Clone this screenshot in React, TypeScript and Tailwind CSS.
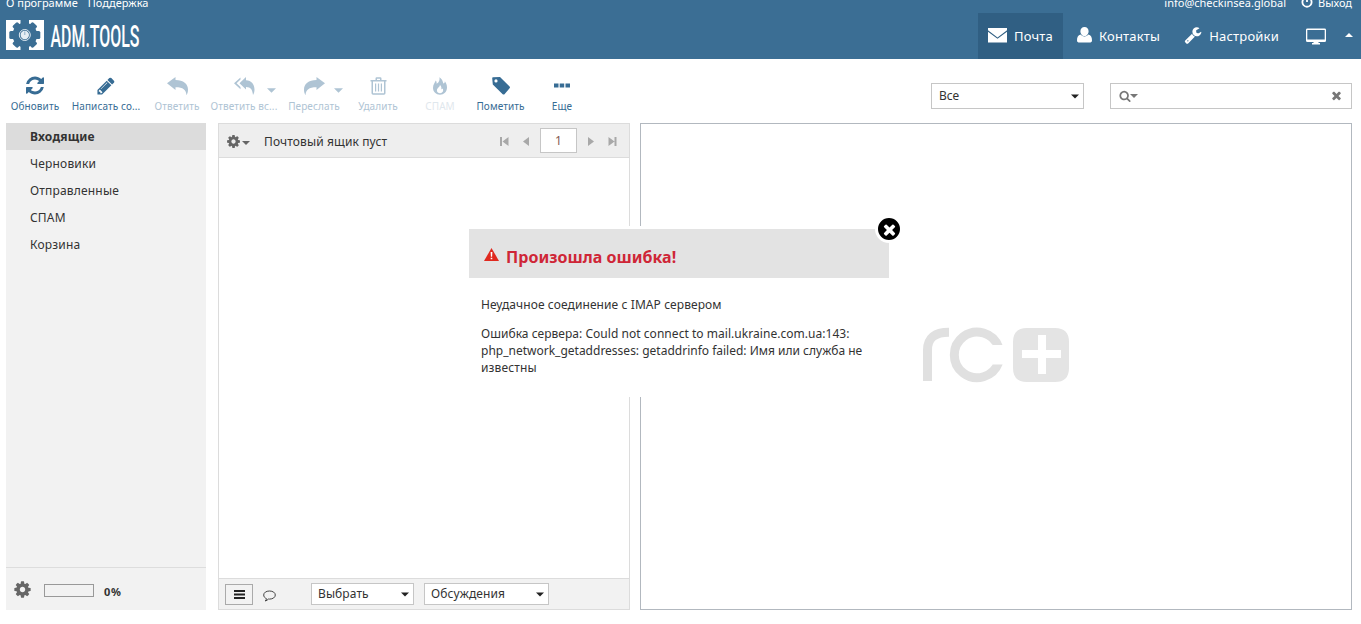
import type { ReactNode } from "react";

type IconProps = { d: string; box?: string; className?: string };

function Icon({ d, box = "0 0 1792 1792", className = "" }: IconProps) {
  return (
    <svg viewBox={box} className={`block shrink-0 fill-current ${className}`} aria-hidden="true">
      <path d={d} fillRule="evenodd" />
    </svg>
  );
}

const REFRESH =
  "M1511 1056q0 5-1 7-64 268-268 434.5t-478 166.5q-146 0-282.5-55t-243.5-157l-129 129q-19 19-45 19t-45-19-19-45v-448q0-26 19-45t45-19h448q26 0 45 19t19 45-19 45l-137 137q71 66 161 102t187 36q134 0 250-65t186-179q11-17 53-117 8-23 30-23h192q13 0 22.5 9.5t9.5 22.5zm25-800v448q0 26-19 45t-45 19h-448q-26 0-45-19t-19-45 19-45l138-138q-148-137-349-137-134 0-250 65t-186 179q-11 17-53 117-8 23-30 23h-199q-13 0-22.5-9.5t-9.5-22.5v-7q65-268 270-434.5t480-166.5q146 0 284 55.5t245 156.5l130-129q19-19 45-19t45 19 19 45z";
const PENCIL =
  "M491 1536l91-91-235-235-91 91v107h128v128h107zm523-928q0-22-22-22-10 0-17 7l-542 542q-7 7-7 17 0 22 22 22 10 0 17-7l542-542q7-7 7-17zm-54-192l416 416-832 832h-416v-416zm683 96q0 53-37 90l-166 166-416-416 166-165q36-38 90-38 53 0 91 38l235 234q37 39 37 91z";
const REPLY = "M-0.500 6.200 L8 0 V3 C16 3 20.500 7 20.500 12.500 C20.500 15 20 16.500 19 18.200 C18.400 12.800 16 10.300 8 10.300 V13 Z";
const REPLY_ALL =
  "M5.500 6.200 L12 0 V3.200 C17.500 3.400 20.500 7.500 20.500 12.500 C20.500 14.500 20 16.500 19 18 C18.400 12.800 17 9.900 12 9.900 V12.600 Z M6.500 0.500 V2.600 L2.600 6.200 L6.500 9.900 V12.200 L0 6.200 Z";
const TRASH =
  "M5.500 3 V1.500 Q5.500 0.300 6.700 0.300 H10.300 Q11.500 0.300 11.500 1.500 V3 H16.500 V4.500 H15.500 V16.300 Q15.500 17.700 14 17.700 H3 Q1.500 17.700 1.500 16.300 V4.500 H0.500 V3 Z M7 3 H10 V1.700 H7 Z M3 4.500 V16.300 H14 V4.500 Z M5 6.500 H6.200 V14.500 H5 Z M7.900 6.500 H9.100 V14.500 H7.900 Z M10.800 6.500 H12 V14.500 H10.800 Z";
const FLAME =
  "M6.500 0 C10.500 2.500 9.500 5.500 11 6.500 C11.800 5.800 12 5 12 4.200 C13.500 6 14.200 8.200 14.200 10.500 C14.200 14.800 11 17.800 7.100 17.800 C3.200 17.800 0 14.800 0 11 C0 7.500 2 5.500 2.800 3.500 C3.600 4.500 3.800 5.500 3.700 6.800 C6.500 5 7 2.500 6.500 0 Z M7 8 C7 10.200 4 11 4 13.500 C4 15.200 5.400 16.300 7.100 16.300 C8.900 16.300 10.300 15.100 10.300 13.400 C10.300 12.600 10.100 12 9.800 11.500 C9.400 12 9 12.200 8.400 12.300 C8.800 10.800 8.400 9 7 8 Z";
const TAG = "M1 0.300 L8 0 L17.600 9.500 Q18.400 10.300 17.600 11.200 L12.500 17.200 Q11.600 18 10.700 17.200 L0.800 7.600 L0.200 1.200 Q0.200 0.400 1 0.300 Z M4 2.300 A1.600 1.600 0 1 0 4 5.500 A1.600 1.600 0 1 0 4 2.300 Z";
const GEAR =
  "M1152 896q0-106-75-181t-181-75-181 75-75 181 75 181 181 75 181-75 75-181zm512-109v222q0 12-8 23t-20 13l-185 28q-19 54-39 91 35 50 107 138 10 12 10 25t-9 23q-27 37-99 108t-94 71q-12 0-26-9l-138-108q-44 23-91 38-16 136-29 186-7 28-36 28h-222q-14 0-24.500-8.500t-11.500-21.500l-28-184q-49-16-90-37l-141 107q-10 9-25 9-14 0-25-11-126-114-165-168-7-10-7-23 0-12 8-23 15-21 51-66.500t54-70.500q-27-50-41-99l-183-27q-13-2-21-12.500t-8-23.500v-222q0-12 8-23t19-13l186-28q14-46 39-92-40-57-107-138-10-12-10-24 0-10 9-23 26-36 98.500-107.500t94.500-71.500q13 0 26 10l138 107q44-23 91-38 16-136 29-186 7-28 36-28h222q14 0 24.500 8.500t11.500 21.500l28 184q49 16 90 37l142-107q9-9 24-9 13 0 25 10 129 119 165 170 7 8 7 22 0 12-8 23-15 21-51 66.500t-54 70.500q26 50 41 98l183 28q13 2 21 12.500t8 23.500z";
const SEARCH =
  "M1216 832q0-185-131.500-316.500t-316.500-131.500-316.500 131.500-131.500 316.500 131.500 316.500 316.500 131.500 316.500-131.500 131.500-316.500zm512 832q0 52-38 90t-90 38q-54 0-90-38l-343-342q-179 124-399 124-143 0-273.500-55.500t-225-150-150-225-55.500-273.500 55.500-273.500 150-225 225-150 273.500-55.500 273.500 55.500 225 150 150 225 55.500 273.500q0 220-124 399l343 343q37 37 37 90z";
const TIMES =
  "M1490 1322q0 40-28 68l-136 136q-28 28-68 28t-68-28l-294-294-294 294q-28 28-68 28t-68-28l-136-136q-28-28-28-68t28-68l294-294-294-294q-28-28-28-68t28-68l136-136q28-28 68-28t68 28l294 294 294-294q28-28 68-28t68 28l136 136q28 28 28 68t-28 68l-294 294 294 294q28 28 28 68z";
const WRENCH =
  "M448 1472q0-26-19-45t-45-19-45 19-19 45 19 45 45 19 45-19 19-45zm644-420l-682 682q-37 37-90 37-52 0-91-37l-106-108q-38-36-38-90 0-53 38-91l681-681q39 98 114.500 173.500t173.500 114.500zm634-435q0 39-23 106-47 134-164.500 217.500t-258.500 83.500q-185 0-316.500-131.500t-131.500-316.500 131.500-316.500 316.500-131.500q58 0 121.500 16.500t107.500 46.500q16 11 16 28t-16 28l-293 169v224l193 107q5-3 79-48.500t135.500-81 70.500-35.500q15 0 23.500 10t8.500 25z";

function Caret({ className = "h-1 w-2" }: { className?: string }) {
  return (
    <svg viewBox="0 0 8 4" className={`block shrink-0 fill-current ${className}`} aria-hidden="true">
      <path d="M0 0H8L4 4Z" />
    </svg>
  );
}

type ToolProps = { label: string; width: string; tone?: string; menu?: string; children: ReactNode };

function Tool({ label, width, tone = "text-[#376c94]", menu, children }: ToolProps) {
  return (
    <button className={`relative flex shrink-0 flex-col items-center ${width} ${tone}`}>
      <span className="flex h-[20px] items-center justify-center">{children}</span>
      <span className="mt-[2px] text-[10px] leading-[16px] tracking-[0.1px] whitespace-nowrap">{label}</span>
      {menu && <Caret className={`absolute top-[12px] h-[5px] w-[9px] ${menu}`} />}
    </button>
  );
}

function Toolbar() {
  return (
    <div className="flex h-[64px] shrink-0 pt-[17px] pl-[6px]">
      <Tool label="Обновить" width="w-[58px]"><Icon d={REFRESH} className="-mt-px ml-[2px] size-[21px]" /></Tool>
      <Tool label="Написать со..." width="w-[84px]"><Icon d={PENCIL} className="size-[20px]" /></Tool>
      <Tool label="Ответить" width="w-[58px]" tone="text-[#afc4d4]">
        <Icon d={REPLY} box="-0.5 0 21 18" className="h-[18px] w-[21px]" />
      </Tool>
      <Tool label="Ответить вс..." width="w-[76px]" tone="text-[#afc4d4]" menu="right-[6px]">
        <Icon d={REPLY_ALL} box="0 0 21 18" className="h-[18px] w-[21px]" />
      </Tool>
      <Tool label="Переслать" width="w-[64px]" tone="text-[#afc4d4]" menu="right-[3px]">
        <Icon d={REPLY} box="-0.5 0 21 18" className="h-[18px] w-[21px] -scale-x-100" />
      </Tool>
      <Tool label="Удалить" width="w-[64px]" tone="text-[#afc4d4]">
        <Icon d={TRASH} box="0 0 17 18" className="h-[18px] w-[17px]" />
      </Tool>
      <Tool label="СПАМ" width="w-[60px]" tone="text-[#dfe7ed]">
        <Icon d={FLAME} box="0 0 14.2 18" className="h-[18px] w-[14px] text-[#afc4d4]" />
      </Tool>
      <Tool label="Пометить" width="w-[61px]"><Icon d={TAG} box="0 0 18 18" className="size-[18px]" /></Tool>
      <Tool label="Еще" width="w-[62px]">
        <Icon d="M0 0.500H4.500V4.500H0ZM5.700 0.500H10.200V4.500H5.700ZM11.500 0.500H16V4.500H11.500Z" box="0 0 16 5" className="mt-[-2px] h-[5px] w-[16px]" />
      </Tool>
      <div className="mt-[7px] ml-auto flex h-[26px] w-[153px] items-center justify-between border border-[#c6c6c6] bg-white pr-[4px] pl-[7px]">
        <span>Все</span>
        <Caret className="h-[5px] w-[8px] text-[#222]" />
      </div>
      <div className="mt-[7px] mr-[9px] ml-[26px] flex h-[26px] w-[242px] items-center border border-[#c6c6c6] bg-white pr-[8px] pl-[8px] text-[#777]">
        <Icon d={SEARCH} className="size-[12px]" />
        <Caret className="-ml-px h-[4px] w-[8px]" />
        <Icon d={TIMES} className="-mt-px ml-auto size-[13px]" />
      </div>
    </div>
  );
}

function Header() {
  return (
    <header className="flex h-[59px] shrink-0 justify-between overflow-hidden bg-[#3b6e94] text-white">
      <div className="pl-[6px]">
        <div className="-mt-[6px] flex gap-[10px] text-[11px] leading-[18px]">
          <span>О программе</span>
          <span>Поддержка</span>
        </div>
        <div className="mt-[8px] flex">
          <svg viewBox="0 0 38 30" className="h-[30px] w-[38px]" aria-hidden="true">
            <path fill="#fff" d="M0 0H38V30H0Z" />
            <g fill="#3b6e94">
              <path d="M14.500 0H23V30H14.500Z" />
              <circle cx="18.800" cy="15" r="12.300" />
              <rect x="3.300" y="11" width="31" height="8" rx="1.500" />
              <rect x="3.800" y="11.500" width="30" height="7" rx="1.500" transform="rotate(47 18.800 15)" />
              <rect x="3.800" y="11.500" width="30" height="7" rx="1.500" transform="rotate(-47 18.800 15)" />
            </g>
            <circle cx="18.800" cy="15" r="5.500" fill="none" stroke="#dfe9f1" strokeWidth="1" />
            <circle cx="18.800" cy="15" r="4.200" fill="#e6eef4" />
            <path d="M18.800 11.500V15" stroke="#8fb0c8" strokeWidth="1" />
          </svg>
          <svg viewBox="0 0 100 30" className="ml-[6px] h-[30px] w-[100px]" role="img" aria-label="ADM.TOOLS">
            <text x="0.500" y="26.500" fill="#fff" className="font-[Roboto] text-[32px] font-medium" textLength="89" lengthAdjust="spacingAndGlyphs">ADM.TOOLS</text>
          </svg>
        </div>
      </div>
      <div className="flex flex-col">
        <div className="-mt-[6px] flex h-[19px] justify-end pr-[9px] text-[11px] leading-[18px]">
          <span>info@checkinsea.global</span>
          <svg viewBox="0 0 12 12" className="mt-[2px] mr-[5px] ml-[15px] size-[12px]" fill="none" stroke="#fff" strokeWidth="1.800" aria-hidden="true">
            <path d="M3.200 2.500A4.600 4.600 0 1 0 8.800 2.500M6 0.500V6" />
          </svg>
          <span>Выход</span>
        </div>
        <nav className="flex h-[46px] items-center text-[13px] tracking-[0.2px]">
          <a className="flex h-[46px] w-[85px] items-center bg-[#305f83] pl-[10px]">
            <svg viewBox="0 0 19 15" className="-mt-[1px] mr-[7px] h-[15px] w-[19px]" aria-hidden="true">
              <path fill="#fff" d="M0 0H19V2.200L9.500 9.500L0 2.200ZM0 3.700L9.500 10.800L19 3.700V14.500H0Z" />
            </svg>
            <span className="pt-px">Почта</span>
          </a>
          <a className="flex items-center pl-[14px]">
            <svg viewBox="0 0 15 16" className="-mt-[3px] mr-[7px] h-[16px] w-[15px] fill-white" aria-hidden="true">
              <path d="M7.500 0C10 0 11.600 1.800 11.600 4.200C11.600 6.600 10 9 7.500 9C5 9 3.400 6.600 3.400 4.200C3.400 1.800 5 0 7.500 0ZM3.600 7.600C4.600 8.900 6 9.600 7.500 9.600C9 9.600 10.400 8.900 11.400 7.600C14 8.100 15 10.500 15 13.500C15 15 14 15.500 12.500 15.500H2.500C1 15.500 0 15 0 13.500C0 10.500 1 8.100 3.600 7.600Z" />
            </svg>
            <span className="pt-px">Контакты</span>
          </a>
          <a className="flex items-center pl-[24px]">
            <Icon d={WRENCH} className="-mt-[3px] mr-[7px] size-[18px]" />
            <span className="pt-px">Настройки</span>
          </a>
          <svg viewBox="0 0 20 17" className="ml-[27px] h-[17px] w-[20px] fill-white" aria-hidden="true">
            <path fillRule="evenodd" d="M1.500 0.500H18.500Q20 0.500 20 1.700V12.800Q20 14 18.500 14H12.500V15H14V16.500H6V15H7.500V14H1.500Q0 14 0 12.800V1.700Q0 0.500 1.500 0.500ZM1.300 2V11.500H18.700V2Z" />
          </svg>
          <Caret className="mt-[-3px] mr-[8px] ml-[19px] h-[4px] w-[8px] rotate-180" />
        </nav>
      </div>
    </header>
  );
}

const folders = ["Входящие", "Черновики", "Отправленные", "СПАМ", "Корзина"];

function Sidebar() {
  return (
    <aside className="flex w-[200px] shrink-0 flex-col bg-[#f2f2f2]">
      <ul>
        {folders.map((name, i) => (
          <li key={name} className={`h-[27px] pl-[24px] leading-[27px] tracking-[0.18px] ${i === 0 ? "bg-[#dcdcdc] font-bold" : ""}`}>
            {name}
          </li>
        ))}
      </ul>
      <div className="mt-auto flex h-[43px] items-center border-t border-[#ddd] pl-[7px]">
        <Icon d={GEAR} className="size-[19px] text-[#666]" />
        <div className="mt-[2px] ml-[12px] h-[13px] w-[50px] border border-[#999]" />
        <span className="mt-[6px] ml-[10px] text-[11px] font-bold tracking-[0.6px]">0%</span>
      </div>
    </aside>
  );
}

function Select({ label, width }: { label: string; width: string }) {
  return (
    <div className={`flex h-[22px] items-center justify-between border border-[#c6c6c6] bg-white pr-[4px] pl-[6px] ${width}`}>
      <span className="tracking-[0.1px]">{label}</span>
      <Caret className="h-[5px] w-[8px] text-[#222]" />
    </div>
  );
}

function MessageList() {
  return (
    <section className="ml-[12px] flex w-[412px] shrink-0 flex-col border border-[#dcdcdc]">
      <div className="flex h-[34px] items-center border-b border-[#dcdcdc] bg-[#eee] pt-[2px] pl-[7px]">
        <Icon d={GEAR} className="size-[15px] text-[#666]" />
        <Caret className="mt-[2px] ml-[1px] h-[4px] w-[8px] text-[#666]" />
        <span className="ml-[14px] tracking-[0.12px]">Почтовый ящик пуст</span>
        <div className="mr-[12px] ml-auto flex items-center text-[#a8a8a8]">
          <Icon d="M0 0H2V9H0ZM8.500 0V9L2.500 4.500Z" box="0 0 9 9" className="size-[9px]" />
          <Icon d="M6 0V9L0 4.500Z" box="0 0 6 9" className="ml-[14px] h-[9px] w-[6px]" />
          <span className="-mt-[2px] ml-[11px] h-[25px] w-[37px] border border-[#c6c6c6] bg-white text-center leading-[24px] text-[#865a52]">1</span>
          <Icon d="M0 0V9L6 4.500Z" box="0 0 6 9" className="ml-[11px] h-[9px] w-[6px]" />
          <Icon d="M6.500 0H8.500V9H6.500ZM0.500 0V9L6.500 4.500Z" box="0 0 9 9" className="ml-[14px] size-[9px]" />
        </div>
      </div>
      <div className="grow" />
      <div className="flex h-[31px] items-center border-t border-[#dcdcdc] bg-[#f2f2f2] pl-[6px]">
        <span className="mt-px flex h-[21px] w-[28px] items-center justify-center border border-[#aaa] text-[#222]">
          <Icon d="M0 0H11V2H0ZM0 3.500H11V5.500H0ZM0 7H11V9H0Z" box="0 0 11 9" className="h-[9px] w-[11px]" />
        </span>
        <svg viewBox="0 0 13 12" className="mt-[3px] ml-[10px] h-[12px] w-[13px]" fill="none" stroke="#444" aria-hidden="true">
          <path d="M3.500 8.700C1.800 8 0.700 6.600 0.700 5C0.700 2.600 3.200 1 6.500 1C9.800 1 12.300 2.600 12.300 5C12.300 7.400 9.800 9.100 6.500 9.100L5.500 9C4.600 10 3.500 10.700 2.200 11C3 10.300 3.400 9.500 3.500 8.700Z" />
        </svg>
        <div className="ml-[35px] flex gap-[10px]">
          <Select label="Выбрать" width="w-[103px]" />
          <Select label="Обсуждения" width="w-[125px]" />
        </div>
      </div>
    </section>
  );
}

function Preview() {
  return (
    <section className="mr-[9px] ml-[10px] grow border border-[#b2b8bf] pt-[203px] pl-[281px]">
      <svg viewBox="0 0 148 56" className="h-[56px] w-[148px]" aria-hidden="true">
        <g fill="none" stroke="#e0e0e0" strokeWidth="9">
          <path d="M5.500 54V23Q5.500 5.200 27 5.200" />
          <path d="M76.500 20A22.800 22.800 0 1 0 76.500 35.800" />
        </g>
        <path fill="#fff" d="M70.500 18H84V37.500H70.500Z" />
        <path fill="#e4e4e4" fillRule="evenodd" d="M105 1H133Q147 1 147 15V41Q147 55 133 55H105Q91 55 91 41V15Q91 1 105 1ZM116 8V23H100V31H116V47H124V31H139V23H124V8Z" />
      </svg>
    </section>
  );
}

function ErrorDialog() {
  return (
    <div role="alertdialog" className="absolute top-[226px] left-[466px] h-[171px] w-[426px] bg-white p-[3px]">
      <div className="flex h-[49px] items-center bg-[#e3e3e3] pl-[15px] text-[#cf2637]">
        <svg viewBox="0 0 15 13" className="mt-px mr-[7px] h-[13px] w-[15px]" aria-hidden="true">
          <path d="M7.500 0L15 13H0Z" fill="#e0291f" />
          <path d="M6.600 4H8.400L8.100 8.700H6.900ZM6.700 9.700H8.300V11.200H6.700Z" fill="#fff" />
        </svg>
        <h2 className="mt-[7px] text-[16px] font-bold tracking-[0.03px]">Произошла ошибка!</h2>
      </div>
      <div className="px-[12px] pt-[18px] leading-[17px]">
        <p className="tracking-[0.09px]">Неудачное соединение с IMAP сервером</p>
        <p className="mt-[12px]">
          <span className="tracking-[0.04px]">Ошибка сервера: Could not connect to mail.ukraine.com.ua:143:</span>
          <br />
          php_network_getaddresses: getaddrinfo failed: Имя или служба не
          <br />
          <span className="tracking-[0.12px]">известны</span>
        </p>
      </div>
      <button aria-label="Закрыть" className="absolute -top-[11px] -right-[11px] flex size-[28px] items-center justify-center rounded-full border-[3px] border-white bg-black text-white">
        <Icon d={TIMES} className="size-[17px]" />
      </button>
    </div>
  );
}

export default function App() {
  return (
    <div className="relative flex h-[624px] w-[1361px] flex-col overflow-hidden bg-white font-['Noto_Sans',sans-serif] text-[12px] text-[#333]">
      <Header />
      <Toolbar />
      <main className="flex h-[487px] pl-[6px]">
        <Sidebar />
        <MessageList />
        <Preview />
      </main>
      <ErrorDialog />
    </div>
  );
}
